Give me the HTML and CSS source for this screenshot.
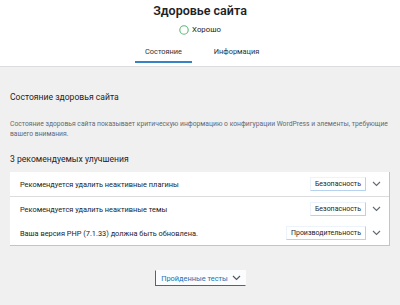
FILE: index.html
```html
<!DOCTYPE html>
<html lang="ru">
<head>
<meta charset="utf-8">
<title>Здоровье сайта</title>
<link rel="stylesheet" href="styles.css">
</head>
<body>
<header class="header">
  <h1 class="title">Здоровье сайта</h1>
  <div class="status">
    <svg class="status-ring" width="10" height="10" viewBox="0 0 10 10"><circle cx="5" cy="5" r="4.2" fill="none" stroke="#5cb774" stroke-width="1.1"/></svg>
    <span>Хорошо</span>
  </div>
  <nav class="tabs">
    <a class="tab active">Состояние</a>
    <a class="tab">Информация</a>
  </nav>
</header>
<main class="main">
  <h2 class="heading">Состояние здоровья сайта</h2>
  <p class="desc">Состояние здоровья сайта показывает критическую информацию о конфигурации WordPress и элементы, требующие вашего внимания.</p>
  <h3 class="heading sub">3 рекомендуемых улучшения</h3>
  <div class="accordion">
    <div class="row first">
      <span class="row-text">Рекомендуется удалить неактивные плагины</span>
      <span class="badge">Безопасность</span>
      <svg class="chev" width="9" height="6" viewBox="0 0 9 6"><polyline points="1,1 4.5,4.5 8,1" fill="none" stroke="#646970" stroke-width="1.1"/></svg>
    </div>
    <div class="row">
      <span class="row-text">Рекомендуется удалить неактивные темы</span>
      <span class="badge">Безопасность</span>
      <svg class="chev" width="9" height="6" viewBox="0 0 9 6"><polyline points="1,1 4.5,4.5 8,1" fill="none" stroke="#646970" stroke-width="1.1"/></svg>
    </div>
    <div class="row">
      <span class="row-text">Ваша версия PHP (7.1.33) должна быть обновлена.</span>
      <span class="badge">Производительность</span>
      <svg class="chev" width="9" height="6" viewBox="0 0 9 6"><polyline points="1,1 4.5,4.5 8,1" fill="none" stroke="#646970" stroke-width="1.1"/></svg>
    </div>
  </div>
  <div class="more">
    <button class="more-btn">Пройденные тесты <svg class="chev" width="9" height="6" viewBox="0 0 9 6"><polyline points="1,1 4.5,4.5 8,1" fill="none" stroke="#50575e" stroke-width="1.2"/></svg></button>
  </div>
</main>
</body>
</html>
```

FILE: styles.css
```css
* { box-sizing: border-box; }
html, body { margin: 0; padding: 0; }
body {
  width: 400px;
  height: 305px;
  overflow: hidden;
  background: #f0f0f1;
  color: #1d2327;
  font-family: Roboto, "Liberation Sans", sans-serif;
  font-size: 7.8px;
}
.header {
  background: #fff;
  border-bottom: 1px solid #dcdcde;
  display: flex;
  flex-direction: column;
  align-items: center;
  height: 67px;
}
.title {
  margin: 2px 0 0;
  font-size: 12.5px;
  line-height: 18px;
  font-weight: 600;
}
.status {
  margin-top: 5px;
  display: flex;
  align-items: center;
  gap: 3px;
  font-size: 7.8px;
  line-height: 10px;
}
.status-ring { display: block; }
.tabs {
  margin-top: 8px;
  display: grid;
  grid-template-columns: 57px 57px;
  column-gap: 16px;
}
.tab {
  text-align: center;
  font-size: 7.4px;
  line-height: 10px;
  padding: 4px 0 6px;
  color: #2c3338;
  white-space: nowrap;
}
.tab.active { box-shadow: inset 0 -2px #3582c4; }
.main {
  padding: 24px 10px 0;
}
.heading {
  margin: 0;
  font-size: 8.6px;
  line-height: 12px;
  font-weight: 400;
}
.desc {
  margin: 16px 0 0;
  font-size: 6.75px;
  line-height: 10px;
  color: #646970;
}
.heading.sub { margin-top: 14px; }
.accordion {
  margin-top: 7px;
  background: #fff;
  border-right: 1px solid #c3c4c7;
  border-bottom: 1px solid #c3c4c7;
}
.row {
  display: flex;
  align-items: center;
  height: 24px;
  padding: 0 8px 0 10px;
}
.row.first { height: 25px; border-bottom: 1px solid #dcdcde; }
.row-text { flex: 1; font-size: 7.4px; }
.badge {
  font-size: 7px;
  line-height: 12px;
  padding: 0 4px;
  border: 1px solid #edf3fa;
  border-right-color: #b5d2ee;
  border-bottom-color: #b5d2ee;
  margin-right: 6px;
}
.chev { display: block; }
.more {
  margin-top: 24px;
  display: flex;
  justify-content: center;
}
.more-btn {
  width: 91px;
  height: 16px;
  display: flex;
  align-items: center;
  justify-content: center;
  gap: 4px;
  background: #fbfcfd;
  color: #2271b1;
  font-family: inherit;
  font-size: 7.4px;
  padding: 0 0 0 2px;
  border: 1px solid transparent;
  border-left-color: #2271b1;
  border-bottom-color: #2271b1;
}
```
